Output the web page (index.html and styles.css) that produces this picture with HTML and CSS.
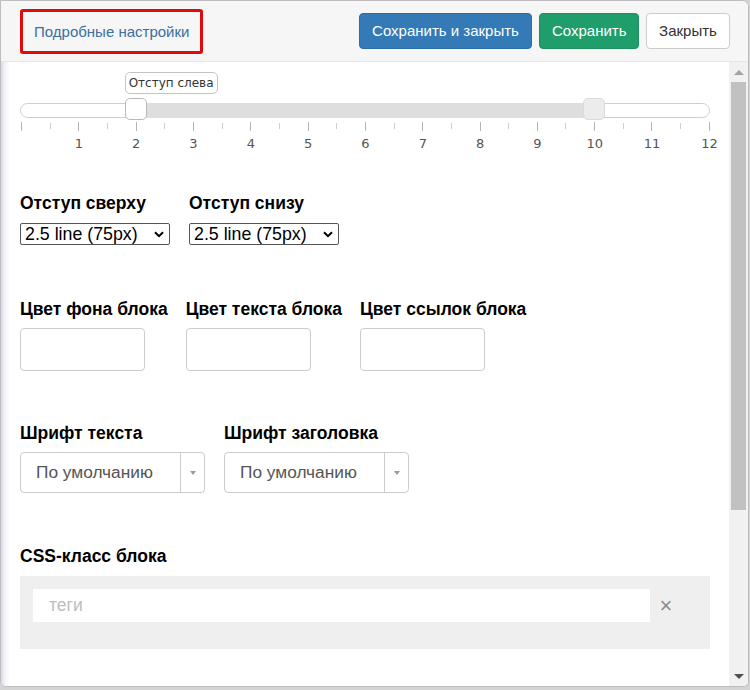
FILE: index.html
```html
<!DOCTYPE html>
<html lang="ru">
<head>
<meta charset="utf-8">
<title>Подробные настройки</title>
<link rel="stylesheet" href="styles.css">
</head>
<body>
<div class="dialog">
  <header class="header">
    <div class="tab-active"><a class="tab-link">Подробные настройки</a></div>
    <div class="actions">
      <button class="btn btn-primary">Сохранить и закрыть</button>
      <button class="btn btn-success">Сохранить</button>
      <button class="btn btn-default">Закрыть</button>
    </div>
  </header>
  <div class="content">
    <main class="body">
      <div class="slider">
        <div class="track">
          <div class="range" style="left:16.6667%;width:66.6667%"></div>
          <div class="handle handle-a" style="left:16.6667%"></div>
          <div class="handle handle-b" style="left:83.3333%"></div>
          <div class="tip" style="left:16.6667%">Отступ слева</div>
        </div>
        <div class="ticks">
          <span class="tick major"></span><span class="tick"></span>
          <span class="tick major"></span><span class="tick"></span>
          <span class="tick major"></span><span class="tick"></span>
          <span class="tick major"></span><span class="tick"></span>
          <span class="tick major"></span><span class="tick"></span>
          <span class="tick major"></span><span class="tick"></span>
          <span class="tick major"></span><span class="tick"></span>
          <span class="tick major"></span><span class="tick"></span>
          <span class="tick major"></span><span class="tick"></span>
          <span class="tick major"></span><span class="tick"></span>
          <span class="tick major"></span><span class="tick"></span>
          <span class="tick major"></span><span class="tick"></span>
          <span class="tick major"></span>
        </div>
        <div class="labels">
          <span class="lbl"><span></span></span>
          <span class="lbl"><span>1</span></span>
          <span class="lbl"><span>2</span></span>
          <span class="lbl"><span>3</span></span>
          <span class="lbl"><span>4</span></span>
          <span class="lbl"><span>5</span></span>
          <span class="lbl"><span>6</span></span>
          <span class="lbl"><span>7</span></span>
          <span class="lbl"><span>8</span></span>
          <span class="lbl"><span>9</span></span>
          <span class="lbl"><span>10</span></span>
          <span class="lbl"><span>11</span></span>
          <span class="lbl"><span>12</span></span>
        </div>
      </div>

      <div class="row row-padding">
        <div class="field">
          <label class="label">Отступ сверху</label>
          <div class="native-select"><span>2.5 line (75px)</span>
            <svg width="10" height="7" viewBox="0 0 10 7"><path d="M1 1.2 L5 5.2 L9 1.2" fill="none" stroke="#000" stroke-width="2"/></svg>
          </div>
        </div>
        <div class="field">
          <label class="label">Отступ снизу</label>
          <div class="native-select"><span>2.5 line (75px)</span>
            <svg width="10" height="7" viewBox="0 0 10 7"><path d="M1 1.2 L5 5.2 L9 1.2" fill="none" stroke="#000" stroke-width="2"/></svg>
          </div>
        </div>
      </div>

      <div class="row row-colors">
        <div class="field">
          <label class="label">Цвет фона блока</label>
          <div class="color-input"></div>
        </div>
        <div class="field">
          <label class="label">Цвет текста блока</label>
          <div class="color-input"></div>
        </div>
        <div class="field">
          <label class="label">Цвет ссылок блока</label>
          <div class="color-input"></div>
        </div>
      </div>

      <div class="row row-fonts">
        <div class="field">
          <label class="label">Шрифт текста</label>
          <div class="combo"><span class="combo-text">По умолчанию</span><span class="combo-arrow"><i></i></span></div>
        </div>
        <div class="field">
          <label class="label">Шрифт заголовка</label>
          <div class="combo"><span class="combo-text">По умолчанию</span><span class="combo-arrow"><i></i></span></div>
        </div>
      </div>

      <div class="css-section">
        <label class="label">CSS-класс блока</label>
        <div class="tags">
          <div class="tag-input">теги</div>
          <span class="tag-clear">×</span>
        </div>
      </div>
    </main>
    <div class="scrollbar">
      <div class="sb-btn"><i class="arrow-up"></i></div>
      <div class="sb-thumb"></div>
      <div class="sb-rest"></div>
      <div class="sb-btn"><i class="arrow-down"></i></div>
    </div>
  </div>
</div>
</body>
</html>
```

FILE: styles.css
```css
html, body {
  margin: 0;
  padding: 0;
  background: #d4d4d4;
}
body {
  font-family: "Liberation Sans", Arial, sans-serif;
  color: #000;
  width: 750px;
  height: 690px;
  overflow: hidden;
}
.dialog {
  box-sizing: border-box;
  width: 749px;
  height: 687px;
  border: 1px solid #bdbdbd;
  border-radius: 0 7px 6px 6px;
  background: #fff;
  overflow: hidden;
  display: flex;
  flex-direction: column;
}
.header {
  box-sizing: border-box;
  height: 61px;
  flex: none;
  background: #f6f6f6;
  border-bottom: 1px solid #e6e6e6;
  display: flex;
  align-items: center;
  justify-content: space-between;
  padding: 0 18px 0 19px;
}
.tab-active {
  box-sizing: border-box;
  height: 45px;
  border: 3px solid #e00a0a;
  border-radius: 3px;
  display: flex;
  align-items: center;
  padding: 0 11px;
  margin-top: 1px;
}
.tab-link {
  font-size: 15px;
  color: #3a6f9e;
}
.actions {
  display: flex;
  gap: 7px;
  margin-top: -1px;
}
.btn {
  font-family: "Liberation Sans", Arial, sans-serif;
  font-size: 15px;
  height: 36px;
  padding: 0 12px;
  border-radius: 4px;
  border: 1px solid transparent;
}
.btn-primary {
  background: #337ab7;
  border-color: #2e6da4;
  color: #fff;
  width: 173px;
}
.btn-success {
  background: #1f9d6b;
  border-color: #1c9262;
  color: #fff;
  width: 100px;
}
.btn-default {
  background: #fff;
  border-color: #ccc;
  color: #333;
  width: 84px;
}
.content {
  flex: 1;
  display: flex;
  min-height: 0;
}
.body {
  flex: 1;
  padding: 10px 19px 0 19px;
  background: linear-gradient(to right, #d9d8ec 0, #f3f3fa 4px, #fff 9px);
}
.slider {
  padding-top: 31px;
}
.track {
  position: relative;
  box-sizing: border-box;
  height: 15px;
  border: 1px solid #cfcfcf;
  border-radius: 8px;
  background: #fff;
}
.range {
  position: absolute;
  top: -1px;
  bottom: -1px;
  background: #dedede;
}
.handle {
  position: absolute;
  top: -6px;
  width: 22px;
  height: 22px;
  margin-left: -11px;
  box-sizing: border-box;
  border-radius: 5px;
}
.handle-a {
  background: #fff;
  border: 1px solid #b9b9b9;
}
.handle-b {
  background: #ececec;
  border: 1px solid #dadada;
}
.tip {
  position: absolute;
  top: -32px;
  margin-left: -11px;
  box-sizing: border-box;
  height: 22px;
  padding: 0 3px;
  border: 1px solid #c4c4c4;
  border-radius: 5px;
  background: #fff;
  font-family: "DejaVu Sans", Verdana, sans-serif;
  font-size: 12px;
  line-height: 20px;
  color: #333;
  white-space: nowrap;
}
.ticks {
  display: flex;
  justify-content: space-between;
  align-items: flex-start;
  height: 9px;
  margin-top: 4px;
  padding: 0 0 0 1px;
}
.tick {
  width: 1px;
  height: 6px;
  margin-top: 1px;
  background: #cfcfcf;
}
.tick.major {
  height: 9px;
  margin-top: 0;
  background: #b5b5b5;
}
.labels {
  display: flex;
  justify-content: space-between;
  margin-top: 5px;
  padding: 0 0 0 1px;
  height: 16px;
}
.lbl {
  width: 1px;
  display: flex;
  justify-content: center;
  overflow: visible;
  white-space: nowrap;
  font-family: "DejaVu Sans", Verdana, sans-serif;
  font-size: 13px;
  line-height: 16px;
  color: #555;
}
.row {
  display: flex;
  gap: 19px;
}
.field {
  display: flex;
  flex-direction: column;
  align-items: flex-start;
}
.label {
  font-weight: bold;
  font-size: 17.5px;
  line-height: 20px;
  margin-bottom: 10px;
  white-space: nowrap;
}
.row-padding {
  margin-top: 41px;
}
.row-colors {
  margin-top: 54px;
  gap: 18px;
}
.row-colors .label {
  margin-bottom: 9px;
}
.row-fonts {
  margin-top: 52px;
}
.row-fonts .label {
  margin-bottom: 9px;
}
.native-select {
  box-sizing: border-box;
  width: 150px;
  height: 22px;
  border: 1px solid #555;
  border-radius: 2px;
  display: flex;
  align-items: center;
  justify-content: space-between;
  padding: 0 5px 0 4px;
  font-size: 17.8px;
  background: #fff;
}
.native-select svg {
  display: block;
}
.color-input {
  box-sizing: border-box;
  width: 125px;
  height: 43px;
  border: 1px solid #ccc;
  border-radius: 4px;
  background: #fff;
}
.combo {
  box-sizing: border-box;
  width: 185px;
  height: 41px;
  border: 1px solid #ccc;
  border-radius: 4px;
  background: #fff;
  display: flex;
}
.combo-text {
  flex: 1;
  padding-left: 15px;
  font-size: 17.3px;
  line-height: 39px;
  color: #555;
}
.combo-arrow {
  width: 23px;
  border-left: 1px solid #ccc;
  display: flex;
  align-items: center;
  justify-content: center;
}
.combo-arrow i {
  width: 0;
  height: 0;
  border-left: 3px solid transparent;
  border-right: 3px solid transparent;
  border-top: 4px solid #999;
}
.css-section {
  margin-top: 53px;
}
.css-section .label {
  display: block;
  margin-bottom: 10px;
}
.tags {
  box-sizing: border-box;
  height: 73px;
  background: #efefef;
  padding: 13px 13px 0 13px;
  display: flex;
  align-items: flex-start;
}
.tag-input {
  width: 601px;
  height: 33px;
  background: #fff;
  padding-left: 16px;
  font-size: 17.5px;
  line-height: 33px;
  color: #bdbdbd;
}
.tag-clear {
  margin-left: 8px;
  width: 16px;
  text-align: center;
  font-size: 22px;
  line-height: 33px;
  color: #8a8a8a;
}
.scrollbar {
  width: 19px;
  flex: none;
  background: #f1f1f1;
  display: flex;
  flex-direction: column;
}
.sb-btn {
  height: 20px;
  display: flex;
  align-items: center;
  justify-content: center;
  flex: none;
}
.arrow-up {
  width: 0;
  height: 0;
  border-left: 5px solid transparent;
  border-right: 5px solid transparent;
  border-bottom: 5px solid #a3a3a3;
}
.arrow-down {
  width: 0;
  height: 0;
  border-left: 5px solid transparent;
  border-right: 5px solid transparent;
  border-top: 5px solid #505050;
}
.sb-thumb {
  height: 428px;
  margin: 0 2px;
  background: #c1c1c1;
  flex: none;
}
.sb-rest {
  flex: 1;
}
```
